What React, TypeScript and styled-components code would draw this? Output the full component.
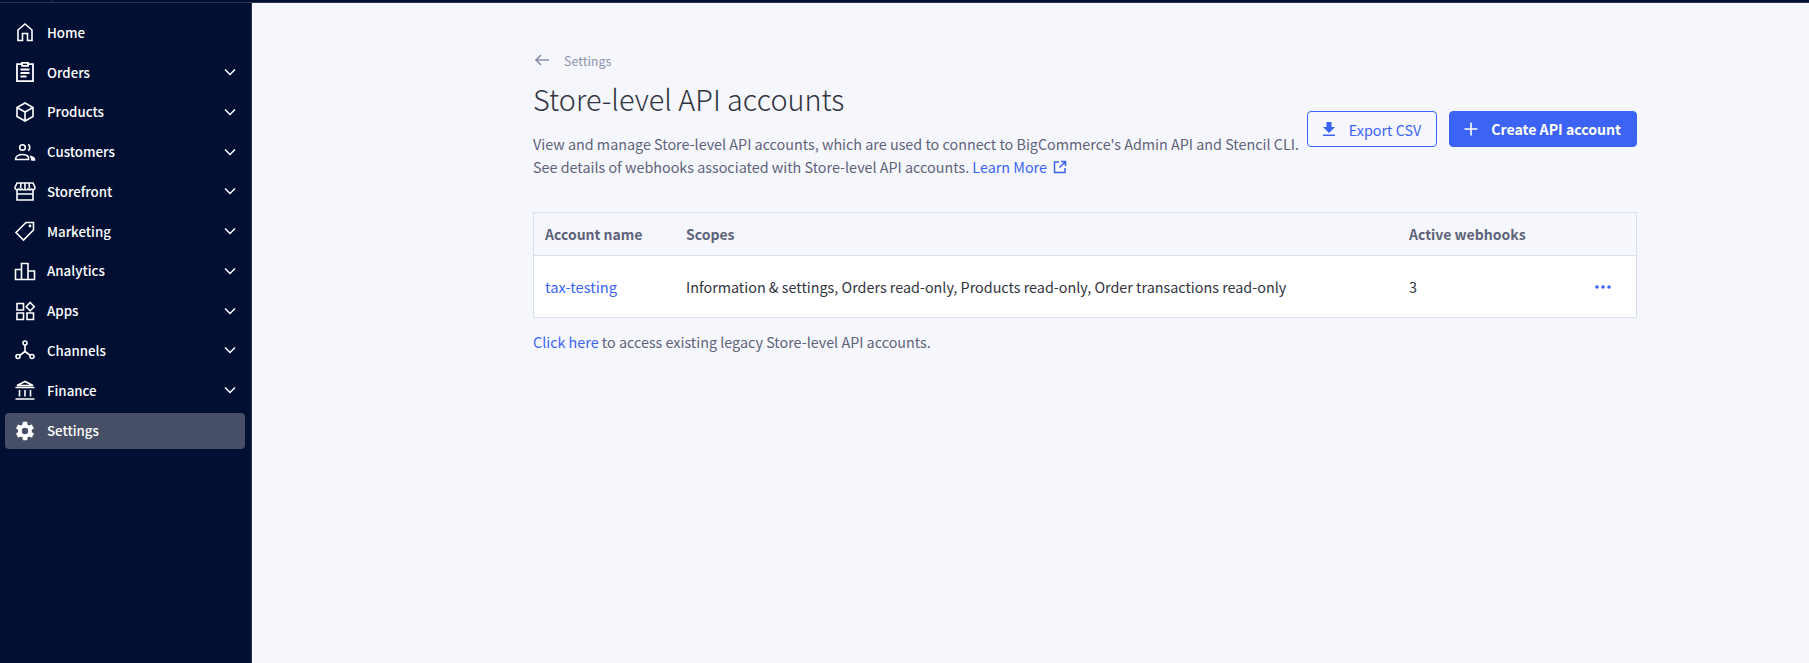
import React from 'react'
import styled, { createGlobalStyle } from 'styled-components'

const GlobalStyle = createGlobalStyle`
  html, body, #root {
    margin: 0;
    height: 100%;
  }
  body {
    background: #f6f7fc;
    overflow: hidden;
    font-family: "Noto Sans CJK JP", "Noto Sans", sans-serif;
  }
  * {
    box-sizing: border-box;
  }
`

const Page = styled.div`
  display: flex;
  flex-direction: column;
  height: 100vh;
`

const TopStrip = styled.div`
  flex: 0 0 3px;
  padding-left: 52px;
  background: #010f33;
  border-bottom: 1px solid #2b3350;
`

const StripMark = styled.div`
  width: 1px;
  height: 2px;
  background: #2b3350;
`

const Body = styled.div`
  display: flex;
  flex: 1;
`

const Sidebar = styled.nav`
  flex: 0 0 252px;
  background: #010f33;
  border-right: 1px solid #2b3350;
  padding: 9.5px 6px 0 5px;
`

const NavList = styled.ul`
  list-style: none;
  margin: 0;
  padding: 0;
`

const NavRow = styled.li<{ $active?: boolean }>`
  display: flex;
  align-items: center;
  height: ${({ $active }) => ($active ? '36px' : '39.75px')};
  margin-top: ${({ $active }) => ($active ? '2.5px' : '0')};
  padding: 0 8px 0 9px;
  border-radius: 4px;
  color: #fff;
  background: ${({ $active }) => ($active ? '#474f66' : 'transparent')};
`

const NavIcon = styled.svg`
  flex: 0 0 22px;
  width: 22px;
  height: 22px;
  fill: none;
  stroke: currentColor;
  stroke-width: 1.6;
`

const NavLabel = styled.span`
  flex: 1;
  margin-left: 11px;
  font-size: 13.3px;
  font-weight: 500;
`

const Chevron = styled.svg`
  width: 14px;
  height: 14px;
  fill: none;
  stroke: #fff;
  stroke-width: 1.5;
`

const Main = styled.main`
  flex: 1;
  padding: 44px 172px 0 281px;
  color: #313440;
`

const Head = styled.header`
  display: flex;
  justify-content: space-between;
`

const Intro = styled.div`
  flex: 1;
`

const Back = styled.div`
  display: flex;
  align-items: center;
  gap: 13px;
  height: 26px;
  color: #8c93ad;
  font-size: 12.5px;
`

const Title = styled.h1`
  margin: 9px 0 16px;
  font-size: 28.8px;
  font-weight: 300;
  line-height: 34px;
  color: #313440;
`

const Description = styled.p`
  margin: 0;
  font-size: 14.35px;
  line-height: 23px;
  white-space: nowrap;
  color: #5e637a;
`

const TextLink = styled.a`
  color: #3c64f4;
`

const AccountLink = styled(TextLink)`
  font-size: 14.7px;
`

const ExternalIcon = styled.svg`
  width: 14px;
  height: 14px;
  margin-left: 6px;
  vertical-align: -1px;
  fill: none;
  stroke: #3c64f4;
  stroke-width: 1.5;
`

const Actions = styled.div`
  display: flex;
  gap: 12px;
  margin-top: 64px;
`

const Button = styled.button<{ $primary?: boolean }>`
  display: flex;
  align-items: center;
  height: 36px;
  padding: 0 15px 0 13px;
  gap: 12px;
  border: 1px solid #3c64f4;
  border-radius: 4px;
  font-family: inherit;
  font-size: ${({ $primary }) => ($primary ? '14.1px' : '14.35px')};
  font-weight: ${({ $primary }) => ($primary ? 600 : 400)};
  color: ${({ $primary }) => ($primary ? '#fff' : '#3c64f4')};
  background: ${({ $primary }) => ($primary ? '#3c64f4' : 'transparent')};
`

const ButtonIcon = styled.svg`
  width: 16px;
  height: 16px;
  fill: currentColor;
`

const Table = styled.div`
  margin-top: 34px;
  border: 1px solid #d9dfee;
  background: #fff;
`

const HeadRow = styled.div`
  display: grid;
  grid-template-columns: 141px 723px 172px 1fr;
  align-items: center;
  height: 43px;
  padding-left: 11px;
  border-bottom: 1px solid #d9dfee;
  background: #f6f7fc;
  font-size: 14px;
  font-weight: 600;
  color: #5e637a;
`

const BodyRow = styled(HeadRow)`
  height: 61px;
  border-bottom: 0;
  background: #fff;
  font-size: 14.35px;
  font-weight: 400;
  color: #313440;
`

const Dots = styled.svg`
  width: 16px;
  height: 4px;
  fill: #3c64f4;
  margin-left: 14px;
`

const Footnote = styled.p`
  margin: 12px 0 0;
  font-size: 14.35px;
  line-height: 23px;
  color: #5e637a;
`

const nav = [
  {
    label: 'Home',
    icon: <path d="M4 19.500V9L11 3l7 6v10.500h-4.500v-7h-5v7z" />,
  },
  {
    label: 'Orders',
    icon: <path d="M7.500 3.200H3v17h16v-17h-4.500M8 1.800h6v3H8zM6.500 8.500h9M6.500 12h9M6.500 15.500h6" strokeWidth="1.800" />,
  },
  {
    label: 'Products',
    icon: <path d="M11 2l8 4.500v9L11 20l-8-4.500v-9zM3 6.500l8 4.500 8-4.500M11 11v9" />,
  },
  {
    label: 'Customers',
    icon: (
      <>
        <circle cx="8.500" cy="6.500" r="2.800" />
        <path d="M1.500 18.500c0-3.500 3.500-5 7-5 3 0 5 1 6 2.500v2.500zM14 3.500c2.300.5 2.300 5.500 0 6" />
        <path d="M17 15.500c2 .5 3.500 1.500 3.500 3.500H18z" fill="currentColor" />
      </>
    ),
  },
  {
    label: 'Storefront',
    icon: <path d="M3 9.500v10.500h16V9.500M3 14h16M3 3h16l2 4.500c0 2.500-3 3-3.500 1-.5 2-3 2-3.500 0-.5 2-3 2-3 0 0 2-2.500 2-3 0-.5 2-3 2-3.500 0C4 10.500 1 10 1 7.500zM7 3l-.5 5.500M11 3v5.500M15 3l.5 5.500" />,
  },
  {
    label: 'Marketing',
    icon: (
      <>
        <path d="M12 2.500h7.500V10L9.500 20 2 12.500z" />
        <circle cx="16" cy="6" r=".6" />
      </>
    ),
  },
  {
    label: 'Analytics',
    icon: <path d="M1.500 19.500V9.500h6v10zM7.500 19.500V3.500h6.500v16zM14 19.500V11h6.500v8.500z" />,
  },
  {
    label: 'Apps',
    icon: <path d="M3 3.500h6.500V10H3zM3 13h6.500v6.500H3zM13 13h6.500v6.500H13zM16.200 2.500l4 4.200-4 4.200-4-4.200z" />,
  },
  {
    label: 'Channels',
    icon: (
      <>
        <circle cx="11" cy="4" r="2" />
        <circle cx="4" cy="17.500" r="2" />
        <circle cx="18" cy="17.500" r="2" />
        <path d="M11 6v6.500L5.500 16.500M11 12.500l5.500 4" />
      </>
    ),
  },
  {
    label: 'Finance',
    icon: <path d="M3 6.500L11 2.500l8 4zM1.500 8.500h19M1.500 20h19M5.500 11v6.500M11 11v6.500M16.500 11v6.500" />,
  },
]

function SettingsGlyph() {
  return (
    <NavIcon viewBox="0 0 24 24" style={{ fill: '#fff', stroke: 'none' }}>
      <path d="M19.400 13c.04-.330.060-.660.060-1s-.020-.670-.060-1l2.100-1.650c.190-.150.240-.420.120-.640l-2-3.460c-.120-.220-.390-.300-.610-.220l-2.490 1c-.520-.400-1.080-.730-1.690-.980l-.380-2.650A.49.490 0 0 0 14 2h-4c-.250 0-.460.180-.490.420l-.380 2.650c-.610.250-1.170.590-1.690.980l-2.490-1c-.230-.090-.490 0-.610.220l-2 3.460c-.130.220-.070.490.120.640L4.570 11c-.040.330-.070.670-.070 1s.030.670.070 1l-2.110 1.650c-.190.150-.240.420-.120.640l2 3.460c.120.220.390.300.610.220l2.490-1c.520.400 1.080.730 1.690.980l.380 2.650c.030.240.240.420.490.420h4c.250 0 .460-.180.490-.420l.380-2.650c.610-.250 1.170-.590 1.690-.980l2.490 1c.230.090.490 0 .610-.220l2-3.460c.120-.220.070-.490-.120-.640zM12 15.500a3.500 3.500 0 1 1 0-7 3.500 3.500 0 0 1 0 7z" />
    </NavIcon>
  )
}

export default function App() {
  return (
    <Page>
      <GlobalStyle />
      <TopStrip>
        <StripMark />
      </TopStrip>
      <Body>
        <Sidebar>
          <NavList>
            {nav.map((item) => (
              <NavRow key={item.label}>
                <NavIcon viewBox="0 0 22 22">{item.icon}</NavIcon>
                <NavLabel>{item.label}</NavLabel>
                {item.label !== 'Home' && (
                  <Chevron viewBox="0 0 14 14">
                    <path d="M2 4.500l5 5 5-5" />
                  </Chevron>
                )}
              </NavRow>
            ))}
            <NavRow $active>
              <SettingsGlyph />
              <NavLabel>Settings</NavLabel>
            </NavRow>
          </NavList>
        </Sidebar>
        <Main>
          <Head>
            <Intro>
              <Back>
                <svg width="18" height="18" viewBox="0 0 18 18" fill="none" stroke="#8c93ad" strokeWidth="1.700">
                  <path d="M16 9H3M8 4L3 9l5 5" />
                </svg>
                Settings
              </Back>
              <Title>Store-level API accounts</Title>
              <Description>
                View and manage Store-level API accounts, which are used to connect to BigCommerce's Admin API and Stencil CLI.
                <br />
                See details of webhooks associated with Store-level API accounts. <TextLink>Learn More</TextLink>
                <ExternalIcon viewBox="0 0 14 14">
                  <path d="M6 2H1.500v10.500H12V8M8 1.500h4.500V6M12.500 1.500L6.500 7.500" />
                </ExternalIcon>
              </Description>
            </Intro>
            <Actions>
              <Button>
                <ButtonIcon viewBox="0 0 16 16">
                  <path d="M5.500 1h5v5H14l-6 6-6-6h3.500zM2 13.500h12V15H2z" />
                </ButtonIcon>
                Export CSV
              </Button>
              <Button $primary>
                <ButtonIcon viewBox="0 0 16 16">
                  <path d="M7.200 1.500h1.600v5.700h5.700v1.600H8.800v5.700H7.200V8.800H1.500V7.200h5.700z" />
                </ButtonIcon>
                Create API account
              </Button>
            </Actions>
          </Head>
          <Table>
            <HeadRow>
              <span>Account name</span>
              <span>Scopes</span>
              <span>Active webhooks</span>
              <span />
            </HeadRow>
            <BodyRow>
              <AccountLink>tax-testing</AccountLink>
              <span>Information &amp; settings, Orders read-only, Products read-only, Order transactions read-only</span>
              <span>3</span>
              <Dots viewBox="0 0 16 4">
                <circle cx="2" cy="2" r="1.800" />
                <circle cx="8" cy="2" r="1.800" />
                <circle cx="14" cy="2" r="1.800" />
              </Dots>
            </BodyRow>
          </Table>
          <Footnote>
            <TextLink>Click here</TextLink> to access existing legacy Store-level API accounts.
          </Footnote>
        </Main>
      </Body>
    </Page>
  )
}
